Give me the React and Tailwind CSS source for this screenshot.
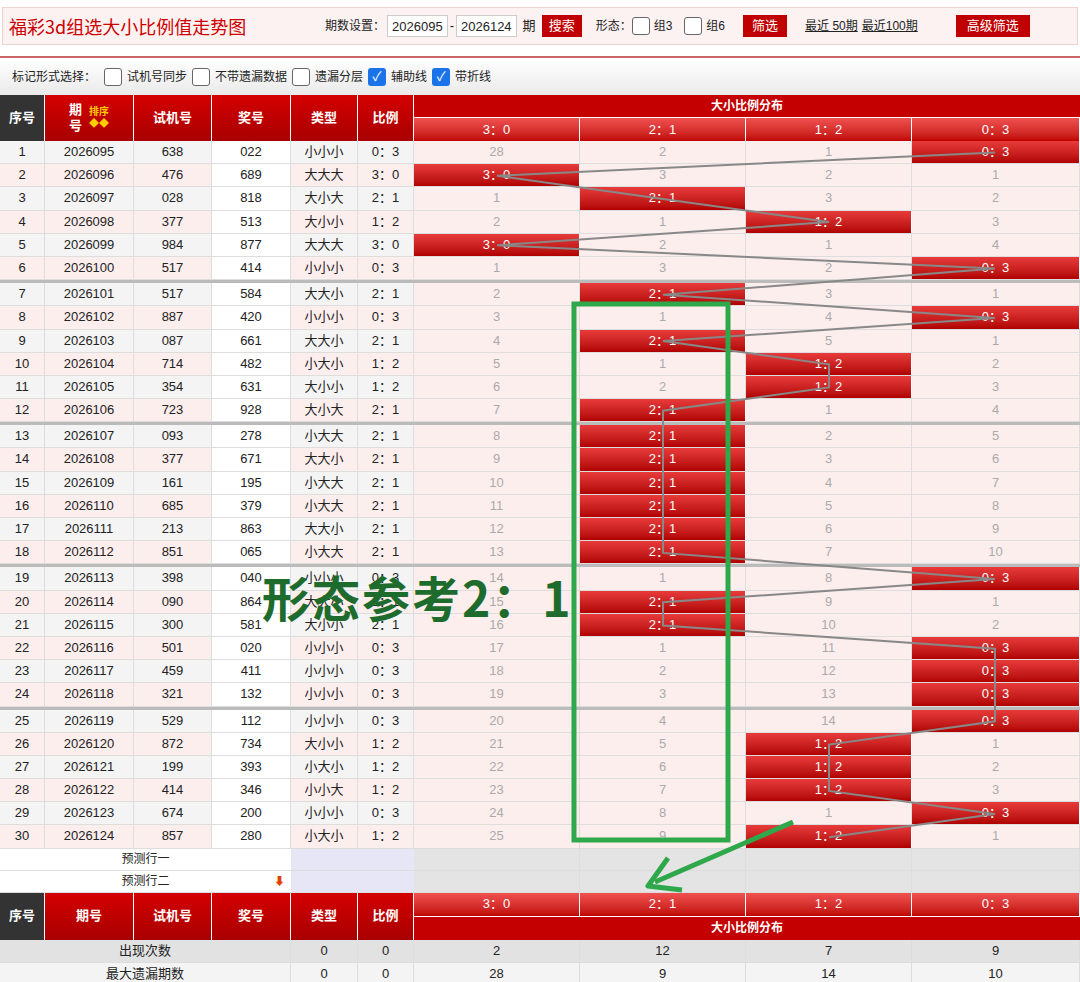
import React from "react";

const R = [
  ["2026095","638","022","小小小",3],["2026096","476","689","大大大",0],["2026097","028","818","大小大",1],
  ["2026098","377","513","大小小",2],["2026099","984","877","大大大",0],["2026100","517","414","小小小",3],
  ["2026101","517","584","大大小",1],["2026102","887","420","小小小",3],["2026103","087","661","大大小",1],
  ["2026104","714","482","小大小",2],["2026105","354","631","大小小",2],["2026106","723","928","大小大",1],
  ["2026107","093","278","小大大",1],["2026108","377","671","大大小",1],["2026109","161","195","小大大",1],
  ["2026110","685","379","小大大",1],["2026111","213","863","大大小",1],["2026112","851","065","小大大",1],
  ["2026113","398","040","小小小",3],["2026114","090","864","大大小",1],["2026115","300","581","大小小",1],
  ["2026116","501","020","小小小",3],["2026117","459","411","小小小",3],["2026118","321","132","小小小",3],
  ["2026119","529","112","小小小",3],["2026120","872","734","大小小",2],["2026121","199","393","小大小",2],
  ["2026122","414","346","小小大",2],["2026123","674","200","小小小",3],["2026124","857","280","小大小",2],
];
const LAB = ["3：0","2：1","1：2","0：3"];
const miss = [27,1,0,0];
const rows = R.map((r) => {
  const m = miss.map((v, c) => (c === r[4] ? 0 : v + 1));
  for (let c = 0; c < 4; c++) miss[c] = m[c];
  return m;
});
const GRID = "grid grid-cols-[45px_89px_78px_79px_67px_56px_166px_166px_166px_168px]";
const top = (i) => 141 + i * 23.2 + Math.floor(i / 6) * 3;
const pts = R.map((r, i) => `${414 + 166 * r[4] + 83},${top(i) + 11.5}`).join(" ");

const Box = ({ on }) =>
  on ? (
    <span className="inline-flex w-[18px] h-[18px] rounded-[3px] bg-[#1a73e8] items-center justify-center text-white text-[13px] leading-none">✓</span>
  ) : (
    <span className="inline-block w-[18px] h-[18px] rounded-[3px] border border-[#666] bg-white" />
  );

const HRed = "bg-gradient-to-b from-[#d40000] to-[#a80000] text-white";
const hitCls = "bg-gradient-to-b from-[#e83a3a] to-[#b00000] text-white";

export default function App() {
  return (
    <div className="relative w-[1080px] h-[982px] bg-white overflow-hidden text-[13px] text-[#222]" style={{ fontFamily: '"Liberation Sans","Noto Sans CJK SC",sans-serif' }}>
      <div className="h-[7px]" />
      <div className="mx-[2px] h-[38px] flex items-center border border-[#f0d0d0] bg-[#fdf2f2]">
        <div className="text-[#c00] text-[18px] ml-[6px] w-[300px]" style={{ fontFamily: '"Noto Sans CJK SC",serif' }}>福彩3d组选大小比例值走势图</div>
        <span className="text-[12px] ml-[16px]">期数设置：</span>
        <span className="border border-[#ccc] bg-white px-[4px] h-[22px] leading-[22px] ml-[2px]">2026095</span>
        <span className="mx-[2px]">-</span>
        <span className="border border-[#ccc] bg-white px-[4px] h-[22px] leading-[22px]">2026124</span>
        <span className="ml-[6px]">期</span>
        <span className="ml-[6px] px-[7px] h-[22px] leading-[22px] bg-[#c00000] text-white">搜索</span>
        <span className="ml-[14px] text-[12px]">形态：</span>
        <Box /><span className="ml-[4px] mr-[12px] text-[12px]">组3</span>
        <Box /><span className="ml-[4px] text-[12px]">组6</span>
        <span className="ml-[18px] px-[9px] h-[22px] leading-[22px] bg-[#c00000] text-white">筛选</span>
        <span className="ml-[18px] underline text-[12px]">最近 50期</span>
        <span className="ml-[4px] underline text-[12px]">最近100期</span>
        <span className="ml-[38px] px-[11px] h-[22px] leading-[22px] bg-[#c00000] text-white">高级筛选</span>
      </div>
      <div className="mt-[11px] h-[2px] bg-[#c66]" />
      <div className="h-[37px] flex items-center gap-[5px] px-[12px] bg-gradient-to-b from-white to-[#eaeaea] text-[12px]">
        <span className="mr-[3px]">标记形式选择：</span>
        <Box /><span>试机号同步</span><Box /><span>不带遗漏数据</span><Box /><span>遗漏分层</span>
        <Box on /><span>辅助线</span><Box on /><span>带折线</span>
      </div>
      <div className={`${GRID} h-[46px] text-[13px] font-bold`}>
        <div className="bg-[#333] text-white flex items-center justify-center border-r border-white">序号</div>
        <div className={`${HRed} flex items-center justify-center border-r border-white gap-[6px]`}>
          <span className="leading-[16px] w-[14px]">期号</span>
          <span className="text-[10px] text-[#fc0] leading-[12px] text-center">排序<br />◆◆</span>
        </div>
        {["试机号","奖号","类型","比例"].map((t) => (
          <div key={t} className={`${HRed} flex items-center justify-center border-r border-white`}>{t}</div>
        ))}
        <div className="col-span-4 flex flex-col">
          <div className="h-[22px] bg-[#c40000] text-white flex items-center justify-center text-[12px]">大小比例分布</div>
          <div className="flex-1 grid grid-cols-[166px_166px_166px_168px] border-t border-white">
            {LAB.map((l) => <div key={l} className="bg-gradient-to-b from-[#f05050] to-[#c00000] text-white font-normal flex items-center justify-center border-r border-white">{l}</div>)}
          </div>
        </div>
      </div>
      {R.map((r, i) => (
        <React.Fragment key={i}>
          <div className={`${GRID} h-[23.2px] border-b border-[#ddd] text-center leading-[22px]`}>
            {[i + 1, r[0], r[1]].map((v, k) => (
              <div key={k} className={`${i % 2 ? "bg-[#fdeeee]" : "bg-[#f4f4f4]"} border-r border-[#ddd]`}>{v}</div>
            ))}
            <div className="bg-white border-r border-[#ddd]">{r[2]}</div>
            <div className={`${i % 2 ? "bg-[#fdeeee]" : "bg-[#f4f4f4]"} border-r border-[#ddd]`}>{r[3]}</div>
            <div className={`${i % 2 ? "bg-[#fdeeee]" : "bg-[#f4f4f4]"} border-r border-[#ddd]`}>{LAB[r[4]]}</div>
            {rows[i].map((m, c) =>
              c === r[4] ? (
                <div key={c} className={`${hitCls} border-r border-white`}>{LAB[c]}</div>
              ) : (
                <div key={c} className="bg-[#fdeeee] text-[#aaa] border-r border-[#ddd]">{m}</div>
              )
            )}
          </div>
          {i % 6 === 5 && i < 29 && <div className="h-[3px] bg-[#bbb]" />}
        </React.Fragment>
      ))}
      {["预测行一","预测行二"].map((t, k) => (
        <div key={t} className={`${GRID} h-[22px] border-b border-[#ddd] text-[12px]`}>
          <div className="col-span-4 bg-white flex items-center justify-center relative">{t}{k === 1 && <span className="absolute right-[6px] text-[#e04000] text-[11px]">⬇</span>}</div>
          <div className="col-span-2 bg-[#e6e6f7]" />
          {[0,1,2,3].map((c) => <div key={c} className="bg-[#e4e4e4] border-r border-[#ddd]" />)}
        </div>
      ))}
      <div className={`${GRID} h-[47px] font-bold`}>
        <div className="bg-[#333] text-white flex items-center justify-center border-r border-white">序号</div>
        {["期号","试机号","奖号","类型","比例"].map((t) => (
          <div key={t} className={`${HRed} flex items-center justify-center border-r border-white`}>{t}</div>
        ))}
        <div className="col-span-4 flex flex-col">
          <div className="h-[23px] grid grid-cols-[166px_166px_166px_168px]">
            {LAB.map((l) => <div key={l} className="bg-gradient-to-b from-[#f05050] to-[#c00000] text-white font-normal flex items-center justify-center border-r border-white">{l}</div>)}
          </div>
          <div className="flex-1 bg-[#c40000] text-white flex items-center justify-center text-[12px] border-t border-white">大小比例分布</div>
        </div>
      </div>
      {[["出现次数",[2,12,7,9],"bg-[#e2e2e2]"],["最大遗漏期数",[28,9,14,10],"bg-[#f4f4f4]"]].map(([t, v, bg]) => (
        <div key={t} className={`${GRID} h-[23px] border-b border-[#ddd] text-center leading-[22px] ${bg}`}>
          <div className="col-span-4 border-r border-[#ddd]">{t}</div>
          <div className="border-r border-[#ddd]">0</div>
          <div className="border-r border-[#ddd]">0</div>
          {v.map((x, c) => <div key={c} className="border-r border-[#ddd]">{x}</div>)}
        </div>
      ))}
      <svg className="absolute left-0 top-0 pointer-events-none" width="1080" height="982">
        <polyline points={pts} fill="none" stroke="#888" strokeWidth="2" />
        <rect x="574" y="304" width="154" height="536" fill="none" stroke="#2ea84a" strokeWidth="5" />
        <line x1="793" y1="822" x2="655" y2="882" stroke="#2ea84a" strokeWidth="5" />
        <polyline points="668,858 648,886 682,890" fill="none" stroke="#2ea84a" strokeWidth="5" strokeLinejoin="round" />
      </svg>
      <div className="absolute left-[262px] top-[560px] text-[48px] font-bold text-[#1e6b2e] tracking-[2px]" style={{ fontFamily: '"Noto Sans CJK SC",sans-serif' }}>形态参考2：1</div>
    </div>
  );
}
